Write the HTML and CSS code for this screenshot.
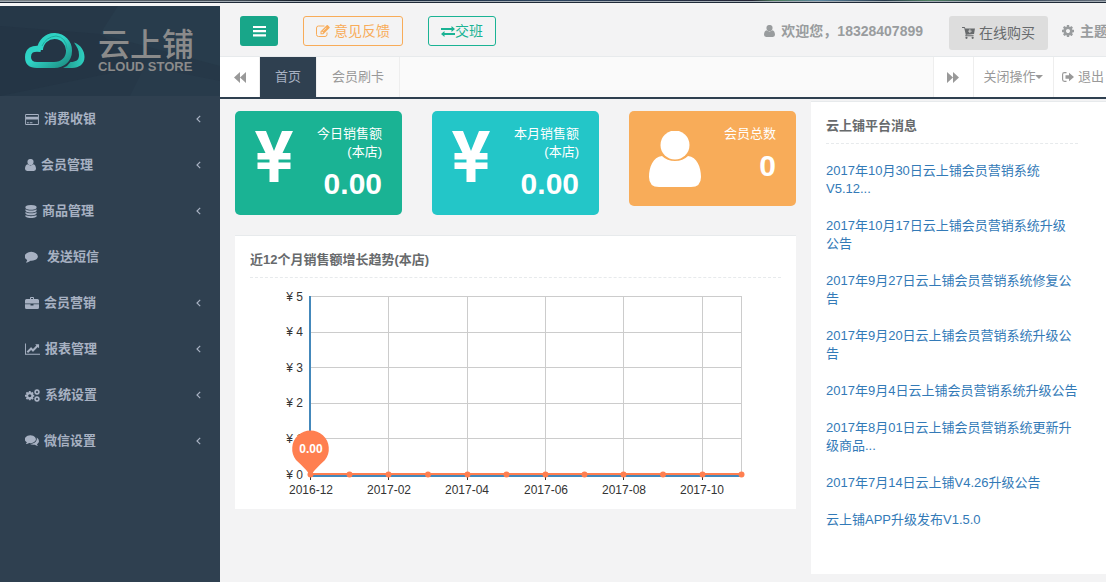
FILE: index.html
```html
<!DOCTYPE html>
<html lang="zh-CN">
<head>
<meta charset="utf-8">
<title>云上铺</title>
<link rel="stylesheet" href="styles.css">
</head>
<body>
<svg class="defs" aria-hidden="true">
  <symbol id="i-user" viewBox="0 0 52 56"><circle cx="26" cy="14" r="14.5"/><path d="M13 25C4 26 0 36 0 46Q0 56 10 56H42Q52 56 52 46C52 36 48 26 39 25Q34 30 26 30T13 25Z"/></symbol>
  <symbol id="i-card" viewBox="0 128 1920 1536"><path d="M1760 128q66 0 113 47t47 113v1216q0 66-47 113t-113 47h-1600q-66 0-113-47t-47-113v-1216q0-66 47-113t113-47h1600zm-1600 128q-13 0-22.500 9.500t-9.500 22.500v224h1664v-224q0-13-9.500-22.500t-22.500-9.500h-1600zm1600 1280q13 0 22.500-9.500t9.500-22.500v-608h-1664v608q0 13 9.500 22.500t22.500 9.500h1600zm-1504-128v-128h256v128h-256zm384 0v-128h384v128h-384z"/></symbol>
  <symbol id="i-db" viewBox="128 0 1536 1792"><path d="M896 768q237 0 443-43t325-127v170q0 69-103 128t-280 93.500-385 34.500-385-34.500-280-93.500-103-128v-170q119 84 325 127t443 43zm0 768q237 0 443-43t325-127v170q0 69-103 128t-280 93.500-385 34.500-385-34.500-280-93.500-103-128v-170q119 84 325 127t443 43zm0-384q237 0 443-43t325-127v170q0 69-103 128t-280 93.500-385 34.500-385-34.500-280-93.500-103-128v-170q119 84 325 127t443 43zm0-1152q208 0 385 34.500t280 93.500 103 128v128q0 69-103 128t-280 93.500-385 34.500-385-34.500-280-93.500-103-128v-128q0-69 103-128t280-93.500 385-34.500z"/></symbol>
  <symbol id="i-comment" viewBox="0 256 1792 1536"><path d="M1792 896q0 174-120 321.500t-326 233-450 85.500q-70 0-145-8-198 175-460 242-49 14-114 22-17 2-30.500-9t-17.500-29q-3-14 14-40 70-70 100-120t58-150q-157-89-247.500-220t-90.500-281q0-130 71-248.500t191-204.500 286-136.500 348-50.500 348 50.500 286 136.500 191 204.500 71 248.500z"/></symbol>
  <symbol id="i-comments" viewBox="0 256 1792 1536"><path d="M1408 768q0 139-94 257t-256.500 186.500-353.500 68.500q-86 0-176-16-124 88-278 128-36 9-86 16-20 2-32-20-6-20 14-40 70-70 101-150-124-72-195-177t-71-224q0-139 94-257t256.500-186.500 353.500-68.500 353.500 68.500 256.500 186.500 94 257zm384 256q0 120-71 224.500t-195 176.500q30 80 101 150 20 20 14 40-12 22-35 20-50-7-86-16-154-40-278-128-90 16-176 16-271 0-472-132 58 4 88 4 161 0 309-45t264-129q125-92 192-212t67-254q0-77-23-152 129 71 204 178t75 230z"/></symbol>
  <symbol id="i-case" viewBox="0 0 14 12"><path d="M5 2V1Q5 0 6 0H8Q9 0 9 1V2H12.500Q14 2 14 3.500V6.500H0V3.500Q0 2 1.500 2ZM6 2H8V1H6ZM0 7.200H5.500V8.500H8.500V7.200H14V10.500Q14 12 12.500 12H1.500Q0 12 0 10.500Z"/></symbol>
  <symbol id="i-line" viewBox="0 128 2048 1536"><path d="M2048 1536v128h-2048v-1536h128v1408h1920zm-128-1248v435q0 21-19.500 29.500t-35.500-7.500l-121-121-633 633q-10 10-23 10t-23-10l-233-233-416 416-192-192 585-585q10-10 23-10t23 10l233 233 464-464-121-121q-16-16-7.500-35.500t29.500-19.500h435q14 0 23 9t9 23z"/></symbol>
  <symbol id="i-cog" viewBox="128 128 1536 1536"><path d="M1152 896q0-106-75-181t-181-75-181 75-75 181 75 181 181 75 181-75 75-181zm512-109v222q0 12-8 23t-20 13l-185 28q-19 54-39 91 35 50 107 138 10 12 10 25t-9 23q-27 37-99 108t-94 71q-12 0-26-9l-138-108q-44 23-91 38-16 136-29 186-7 28-36 28h-222q-14 0-24.500-8.500t-11.500-21.500l-28-184q-49-16-90-37l-141 107q-10 9-25 9-14 0-25-11-126-114-165-168-7-10-7-23 0-12 8-23 15-21 51-66.500t54-70.500q-27-50-41-99l-183-27q-13-2-21-12.500t-8-23.500v-222q0-12 8-23t19-13l186-28q14-46 39-92-40-57-107-138-10-12-10-24 0-10 9-23 26-36 98.500-107.500t94.500-71.500q13 0 26 10l138 107q44-23 91-38 16-136 29-186 7-28 36-28h222q14 0 24.500 8.500t11.500 21.500l28 184q49 16 90 37l142-107q9-9 24-9 13 0 25 10 129 119 165 170 7 8 7 22 0 12-8 23-15 21-51 66.500t-54 70.500q26 50 41 98l183 28q13 2 21 12.500t8 23.500z"/></symbol>
  <symbol id="i-cogs" viewBox="0 0 15 13"><use href="#i-cog" x="0" y="2" width="9.500" height="9.500"/><use href="#i-cog" x="9" y="0" width="6" height="6"/><use href="#i-cog" x="9" y="7" width="6" height="6"/></symbol>
  <symbol id="i-left" viewBox="0 0 5 8"><path d="M4.200.8 1 4 4.200 7.200" fill="none" stroke="currentColor" stroke-width="1.200"/></symbol>
  <symbol id="i-bars" viewBox="0 0 13 11"><path d="M0 0H13V2H0ZM0 4H13V6.200H0ZM0 8.300H13V10.500H0Z"/></symbol>
  <symbol id="i-edit" viewBox="0 0 14 12"><path d="M11 7.500V9.500Q11 11.500 9 11.500H2.500Q.5 11.500.5 9.500V3Q.5 1 2.500 1H8.500" fill="none" stroke="currentColor"/><path d="M4.500 6.500 10.700.3Q11.300-.2 11.900.3L13.500 1.900Q14 2.500 13.500 3.100L7.300 9.200H4.500ZM5.500 7V8.200H6.800L7.300 7.700 6 6.400ZM7 6.300 10.500 2.900 10.200 2.600 6.700 6Z" fill-rule="evenodd"/></symbol>
  <symbol id="i-swap" viewBox="0 0 14 11"><path d="M0 2H10.500V0L14 3 10.500 6V4H0ZM14 7H3.500V5L0 8 3.500 11V9H14Z"/></symbol>
  <symbol id="i-cart" viewBox="0 0 14 13"><path d="M0 0H2.500Q3.200 0 3.400 1L3.500 1.500H14L13 7.500 4.800 8.300 4.600 9H12.500V10H3.400L4 8 2.400 1H0ZM8 2.500V4H6.500V5H8V6.500H9V5H10.500V4H9V2.500Z" fill-rule="evenodd"/><circle cx="4.800" cy="11.700" r="1.200"/><circle cx="11.500" cy="11.700" r="1.200"/></symbol>
  <symbol id="i-back" viewBox="0 0 12 11"><path d="M6 0V11L0 5.500ZM12 0V11L6 5.500Z"/></symbol>
  <symbol id="i-fwd" viewBox="0 0 12 11"><path d="M0 0V11L6 5.500ZM6 0V11L12 5.500Z"/></symbol>
  <symbol id="i-exit" viewBox="0 0 12 10"><path d="M4.500.7H2.500Q.6.700.6 2.500V7.500Q.6 9.300 2.500 9.300H4.500" fill="none" stroke="currentColor" stroke-width="1.200"/><path d="M3.500 3.300H7V.8L12 5 7 9.200V6.700H3.500Z"/></symbol>
</svg>

<div class="window-edge"></div>
<div class="shell">
  <aside class="sidebar">
    <div class="brand">
      <svg class="brand-facets" viewBox="0 0 220 90" preserveAspectRatio="none" aria-hidden="true"><path d="M0 20 100 28 145 60 0 90Z" fill="#243545"/><path d="M118 0H220V60L100 28Z" fill="#283c4c"/><path d="M145 60 220 75V90H130Z" fill="#283b4b"/></svg>
      <svg class="brand-cloud" viewBox="0 0 60 36" aria-hidden="true">
        <defs>
          <linearGradient id="g1" x1="0" y1="0" x2="1" y2="1"><stop offset="0" stop-color="#2bcdbd"/><stop offset=".45" stop-color="#30d5c8"/><stop offset="1" stop-color="#1d8f84"/></linearGradient>
          <linearGradient id="g2" x1="0" y1="0" x2="1" y2="0"><stop offset="0" stop-color="#1f988b"/><stop offset="1" stop-color="#2ecfc0"/></linearGradient>
        </defs>
        <path d="M49 9.500C56 12 59.500 18 59.500 24 59.500 31 54 35 47 35H38Q43 33 45.500 29C51 29 54 27 54 22 54 17 52 14 49 9.500Z" fill="url(#g2)"/>
        <path d="M16 16Q3 14 3 24 3 32 12 32H29C38 32 44 26 44 18A14.500 14.500 0 0 0 15 17" fill="none" stroke="url(#g1)" stroke-width="6"/>
        <path d="M17 13Q21 4 31 3Q41 4 42 16" fill="none" stroke="#1fa99c" stroke-width="1"/>
      </svg>
      <div class="brand-name"><span class="brand-cn">云上铺</span><span class="brand-en">CLOUD STORE</span></div>
    </div>
    <nav class="menu">
      <a href="#"><svg width="14" height="11"><use href="#i-card"/></svg>消费收银<svg class="arrow" width="5" height="8"><use href="#i-left"/></svg></a>
      <a href="#"><svg width="11" height="12"><use href="#i-user"/></svg>会员管理<svg class="arrow" width="5" height="8"><use href="#i-left"/></svg></a>
      <a href="#"><svg width="12" height="13"><use href="#i-db"/></svg>商品管理<svg class="arrow" width="5" height="8"><use href="#i-left"/></svg></a>
      <a href="#" class="wide"><svg width="13" height="12"><use href="#i-comment"/></svg>发送短信</a>
      <a href="#"><svg width="14" height="12"><use href="#i-case"/></svg>会员营销<svg class="arrow" width="5" height="8"><use href="#i-left"/></svg></a>
      <a href="#"><svg width="15" height="12"><use href="#i-line"/></svg>报表管理<svg class="arrow" width="5" height="8"><use href="#i-left"/></svg></a>
      <a href="#"><svg width="15" height="13"><use href="#i-cogs"/></svg>系统设置<svg class="arrow" width="5" height="8"><use href="#i-left"/></svg></a>
      <a href="#"><svg width="14" height="12"><use href="#i-comments"/></svg>微信设置<svg class="arrow" width="5" height="8"><use href="#i-left"/></svg></a>
    </nav>
  </aside>

  <div class="page">
    <header class="topbar">
      <button class="btn solid" aria-label="菜单"><svg width="13" height="11"><use href="#i-bars"/></svg></button>
      <button class="btn warn"><svg width="14" height="12"><use href="#i-edit"/></svg>意见反馈</button>
      <button class="btn swap"><svg width="14" height="11"><use href="#i-swap"/></svg>交班</button>
      <div class="account">
        <span class="welcome"><svg width="11" height="12"><use href="#i-user"/></svg>欢迎您，18328407899</span>
        <button class="btn buy"><svg width="13" height="12"><use href="#i-cart"/></svg>在线购买</button>
        <a href="#" class="theme"><svg width="12" height="12"><use href="#i-cog"/></svg>主题</a>
      </div>
    </header>
    <nav class="tabs">
      <button class="step" aria-label="左移"><svg width="12" height="11"><use href="#i-back"/></svg></button>
      <a href="#" class="tab active">首页</a>
      <a href="#" class="tab">会员刷卡</a>
      <button class="step right" aria-label="右移"><svg width="12" height="11"><use href="#i-fwd"/></svg></button>
      <button class="close">关闭操作<span class="caret"></span></button>
      <a href="#" class="exit"><svg width="12" height="10"><use href="#i-exit"/></svg>退出</a>
    </nav>

    <main class="content">
      <div class="left">
        <div class="cards">
          <section class="card green">
            <svg class="card-icon" viewBox="0 0 52 66" aria-hidden="true"><path d="M0 6H11L19 26 27 6H38L27.500 28H35.500V34.500H23.500V37.500H35.500V44H23.500V57H14.500V44H2.500V37.500H14.500V34.500H2.500V28H10.500Z"/></svg>
            <div class="card-text"><span>今日销售额</span><span>(本店)</span><strong>0.00</strong></div>
          </section>
          <section class="card cyan">
            <svg class="card-icon" viewBox="0 0 52 66" aria-hidden="true"><path d="M0 6H11L19 26 27 6H38L27.500 28H35.500V34.500H23.500V37.500H35.500V44H23.500V57H14.500V44H2.500V37.500H14.500V34.500H2.500V28H10.500Z"/></svg>
            <div class="card-text"><span>本月销售额</span><span>(本店)</span><strong>0.00</strong></div>
          </section>
          <section class="card orange">
            <svg class="card-icon" viewBox="0 0 52 66" aria-hidden="true"><use href="#i-user" y="6" width="52" height="56"/></svg>
            <div class="card-text"><span>会员总数</span><strong>0</strong></div>
          </section>
        </div>

        <section class="panel chart-panel">
          <h2>近12个月销售额增长趋势(本店)</h2>
          <svg class="chart" viewBox="0 0 531 221" role="img" aria-label="销售额趋势">
            <path class="grid" d="M60 18.500H492M60 54.500H492M60 89.500H492M60 125.500H492M60 160.500H492M138.500 18V196M217.500 18V196M295.500 18V196M373.500 18V196M452.500 18V196M491.500 18V196"/>
            <path class="axis" d="M60 18V198M59 198H492"/>
            <path class="tick" d="M60.500 198V202M138.500 198V202M217.500 198V202M295.500 198V202M373.500 198V202M452.500 198V202"/>
            <path class="series" d="M60 196H492"/>
            <g class="y-labels">
              <text x="53" y="23">¥ 5</text><text x="53" y="58">¥ 4</text><text x="53" y="94">¥ 3</text><text x="53" y="129">¥ 2</text><text x="53" y="165">¥ 1</text><text x="53" y="201">¥ 0</text>
            </g>
            <g class="x-labels">
              <text x="61" y="216">2016-12</text><text x="139" y="216">2017-02</text><text x="217" y="216">2017-04</text><text x="296" y="216">2017-06</text><text x="374" y="216">2017-08</text><text x="452" y="216">2017-10</text>
            </g>
            <g class="dots">
              <circle cx="60.500" cy="196.500" r="3"/><circle cx="99.500" cy="196.500" r="3"/><circle cx="138.500" cy="196.500" r="3"/><circle cx="178" cy="196.500" r="3"/><circle cx="217.500" cy="196.500" r="3"/><circle cx="256.500" cy="196.500" r="3"/><circle cx="295.500" cy="196.500" r="3"/><circle cx="334.500" cy="196.500" r="3"/><circle cx="373.500" cy="196.500" r="3"/><circle cx="413" cy="196.500" r="3"/><circle cx="452.500" cy="196.500" r="3"/><circle cx="491.500" cy="196.500" r="3"/>
              <path d="M60.500 198Q58 193 46 182A18.300 18.300 0 1 1 75 182Q63 193 60.500 198Z"/>
            </g>
            <text class="pin-label" x="61" y="175">0.00</text>
          </svg>
        </section>
      </div>

      <aside class="panel news">
        <h2>云上铺平台消息</h2>
        <ul>
          <li><a href="#">2017年10月30日云上铺会员营销系统V5.12...</a></li>
          <li><a href="#">2017年10月17日云上铺会员营销系统升级公告</a></li>
          <li><a href="#">2017年9月27日云上铺会员营销系统修复公告</a></li>
          <li><a href="#">2017年9月20日云上铺会员营销系统升级公告</a></li>
          <li><a href="#">2017年9月4日云上铺会员营销系统升级公告</a></li>
          <li><a href="#">2017年8月01日云上铺会员营销系统更新升级商品...</a></li>
          <li><a href="#">2017年7月14日云上铺V4.26升级公告</a></li>
          <li><a href="#">云上铺APP升级发布V1.5.0</a></li>
        </ul>
      </aside>
    </main>
  </div>
</div>
</body>
</html>
```
FILE: styles.css
```css
* { box-sizing: border-box; }
body {
  margin: 0;
  min-height: 100vh;
  display: flex;
  flex-direction: column;
  overflow: hidden;
  background: #f3f3f4;
  color: #676a6c;
  font: 13px/18px "Liberation Sans", Arial, "Noto Sans CJK SC", sans-serif;
}
a { color: inherit; text-decoration: none; }
button { font: inherit; color: inherit; border: 0; background: none; padding: 0; cursor: pointer; }
svg { fill: currentColor; flex: none; }
.defs { position: absolute; width: 0; height: 0; }

.window-edge {
  height: 6px;
  background:
    linear-gradient(#1f2a38, #1f2a38) 0 2px / 100% 1px no-repeat,
    linear-gradient(#a4adb5, #a4adb5) 0 1px / 100% 1px no-repeat,
    linear-gradient(90deg, #7c8488, #3c4650 22%, #141d28 27%, #2c4560 50%, #223 68%, #4a7a58 70%, #5b86a0 74%, #26384a 80%, #4f8060 84%, #2a3c50 90%, #66707c) 0 0 / 100% 1px no-repeat,
    #f5f5f5;
}
.shell { display: flex; flex: 1; }

.sidebar { width: 220px; flex: none; background: #2f4050; color: #a7b1c2; }
.brand {
  position: relative;
  display: flex;
  align-items: center;
  gap: 13px;
  height: 90px;
  padding: 0 25px;
  background: #263848;
}
.brand-facets { position: absolute; inset: 0; width: 100%; height: 100%; }
.brand-cloud { position: relative; width: 60px; height: 36px; }
.brand-name { position: relative; display: flex; flex-direction: column; padding-bottom: 4px; color: #8b8b8b; white-space: nowrap; }
.brand-cn { font-family: "Noto Sans CJK SC", sans-serif; font-size: 32px; font-weight: 500; line-height: 36px; }
.brand-en { font-size: 13px; line-height: 14px; font-weight: bold; }

.menu a {
  display: flex;
  align-items: center;
  gap: 5px;
  padding: 14px 19px 14px 25px;
  font-weight: bold;
}
.menu .wide { gap: 9px; }
.menu .arrow { margin-left: auto; }

.page { flex: 1; min-width: 0; }
.topbar {
  display: flex;
  align-items: flex-start;
  gap: 25px;
  height: 51px;
  padding: 10px 0 0 20px;
  border-bottom: 1px solid #e7eaec;
  font-size: 14px;
  white-space: nowrap;
}
.btn {
  display: flex;
  align-items: center;
  justify-content: center;
  height: 30px;
  padding: 0 12px;
  border: 1px solid transparent;
  border-radius: 3px;
}
.solid { width: 38px; background: #18a689; color: #fff; }
.warn { gap: 4px; border-color: #f8ac59; color: #f8ac59; }
.swap { border-color: #1ab394; color: #1ab394; }
.account {
  display: flex;
  align-items: flex-start;
  margin: 0 -2px 0 auto;
  color: #999c9e;
  font-weight: bold;
  line-height: 30px;
}
.welcome, .theme { display: flex; align-items: center; gap: 6px; }
.buy { gap: 4px; height: 34px; margin: 0 14px 0 26px; background: #ddd; color: #676a6c; font-weight: normal; }

.tabs {
  display: flex;
  height: 42px;
  border-bottom: 2px solid #2f4050;
  background: #fafafa;
  color: #999;
  white-space: nowrap;
}
.tabs > * { display: flex; align-items: center; justify-content: center; }
.step { width: 40px; background: #fff; border-right: 1px solid #eee; }
.tab { padding: 0 15px; border: 0 solid #eee; border-width: 0 1px; }
.tab.active { background: #2f4050; color: #a7b1c2; border: 0; }
.right { width: 41px; margin-left: auto; border-left: 1px solid #eee; }
.close { width: 80px; background: #fff; border-right: 1px solid #eee; }
.caret { border: 4px solid transparent; border-top-color: currentColor; border-bottom: 0; }
.exit { gap: 4px; padding: 0 2px 0 8px; background: #fff; }

.content {
  display: grid;
  grid-template-columns: 561fr 295fr;
  align-items: start;
  gap: 15px;
  padding: 2px 0 8px 15px;
}
.left { padding-top: 10px; min-width: 0; }
.cards { display: grid; grid-template-columns: repeat(3, 1fr); align-items: start; gap: 30px; margin-bottom: 20px; }
.card {
  display: flex;
  justify-content: space-between;
  padding: 14px 20px 15px;
  border-radius: 5px;
  color: #fff;
}
.green { background: #1ab394; }
.cyan { background: #23c6c8; }
.orange { background: #f8ac59; }
.card-icon { width: 52px; height: 66px; }
.card-text { display: flex; flex-direction: column; align-items: flex-end; white-space: nowrap; }
.card-text strong { margin-top: 6px; font-size: 30px; line-height: 33px; }

.panel { background: #fff; border-top: 1px solid #e7eaec; }
.panel h2 { margin: 0; padding-bottom: 8px; font-size: 13px; line-height: 18px; border-bottom: 1px dashed #e7eaec; }
.chart-panel { padding: 15px 15px 10px; }
.chart { display: block; width: 100%; font-size: 12px; }
.grid { stroke: #ccc; fill: none; }
.tick { stroke: #333; }
.axis { stroke: #48b; stroke-width: 2; fill: none; }
.series { stroke: #ff7f50; stroke-width: 2; }
.dots { fill: #ff7f50; }
.y-labels { fill: #333; text-anchor: end; }
.x-labels { fill: #333; text-anchor: middle; }
.pin-label { fill: #fff; font-weight: bold; text-anchor: middle; }

.news { padding: 15px 28px 45px 15px; }
.news ul { display: grid; gap: 19px; margin: 18px 0 0; padding: 0; list-style: none; color: #337ab7; }
```
